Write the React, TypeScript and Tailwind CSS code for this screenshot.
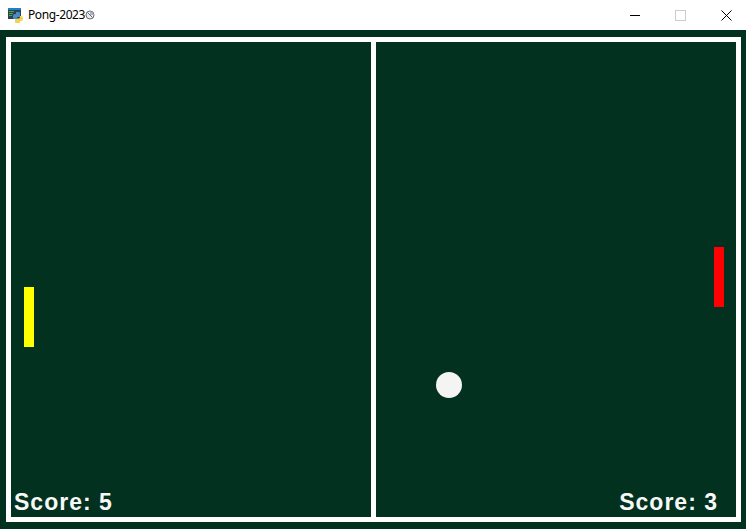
function PythonIcon() {
  return (
    <svg width="15" height="15" viewBox="0 0 15 15" className="shrink-0">
      <rect x="0" y="0" width="13" height="11" fill="#2e4150" />
      <rect x="0" y="0" width="13" height="2" fill="#1e7fd0" />
      <rect x="1" y="3" width="5" height="1" fill="#3fb24a" />
      <rect x="1" y="5" width="4" height="1" fill="#3fb24a" />
      <rect x="1" y="7" width="3" height="1" fill="#3fb24a" />
      <path d="M8 4h3a1 1 0 0 1 1 1v4H9v1h2v1H7a2 2 0 0 1-2-1V8a2 2 0 0 1 2-2h1V4z" fill="#4a8cc4" />
      <path d="M12 8h1a2 2 0 0 1 2 2v1a2 2 0 0 1-2 2h-1v1a1 1 0 0 1-1 1H8a1 1 0 0 1-1-1v-3h3a2 2 0 0 0 2-2V8z" fill="#f6d34a" />
    </svg>
  );
}

function BusyIcon() {
  return (
    <svg width="10" height="10" viewBox="0 0 10 10" className="shrink-0">
      <circle cx="5" cy="5" r="4" fill="#ececec" stroke="#6a6a70" strokeWidth="1" />
      <path d="M2.5 2.5L7.5 7.5" stroke="#6a6a70" strokeWidth="1" />
      <path d="M5 1.5A3.5 3.5 0 0 1 8.5 5H5z" fill="#a9b4c8" />
    </svg>
  );
}

function TitleBar() {
  return (
    <div className="flex h-[30px] items-center bg-white">
      <div className="flex items-center pl-2">
        <PythonIcon />
        <span className="ml-[5px] text-xs leading-none tracking-[-0.4px] text-black [font-family:'Noto_Sans',sans-serif]">Pong-2023</span>
        <BusyIcon />
      </div>
      <div className="ml-auto flex items-center pr-[14px]">
        <div className="h-px w-[10px] bg-black" />
        <div className="ml-[35px] h-[11px] w-[11px] border border-[#cccccc]" />
        <svg width="11" height="11" viewBox="0 0 11 11" className="ml-[35px]">
          <path d="M0.5 0.5L10.5 10.5M10.5 0.5L0.5 10.5" stroke="#000" strokeWidth="1" fill="none" />
        </svg>
      </div>
    </div>
  );
}

function Score({ text }: { text: string }) {
  return (
    <span className="text-[23px] leading-none font-bold tracking-[1px] text-[#f8f8f8] [font-family:'Liberation_Sans',sans-serif]">
      {text}
    </span>
  );
}

export default function App() {
  return (
    <div className="h-[529px] w-[746px] overflow-hidden bg-[#023120]">
      <TitleBar />
      <div className="pt-[7px] pl-[6px]">
        <div className="relative flex h-[485px] w-[735px] border-[5px] border-white">
          <div className="flex w-[360px] items-end pb-[3px] pl-[3px]">
            <Score text="Score: 5" />
          </div>
          <div className="w-[5px] bg-white" />
          <div className="flex w-[360px] items-end justify-end pr-[18px] pb-[3px]">
            <Score text="Score: 3" />
          </div>
          {/* game objects sit on a free canvas */}
          <div className="absolute top-[245px] left-[13px] h-[60px] w-[10px] bg-[#ffff00]" />
          <div className="absolute top-[205px] left-[703px] h-[60px] w-[10px] bg-[#ff0000]" />
          <div className="absolute top-[330px] left-[425px] h-[26px] w-[26px] rounded-full bg-[#f4f4f4]" />
        </div>
      </div>
    </div>
  );
}
